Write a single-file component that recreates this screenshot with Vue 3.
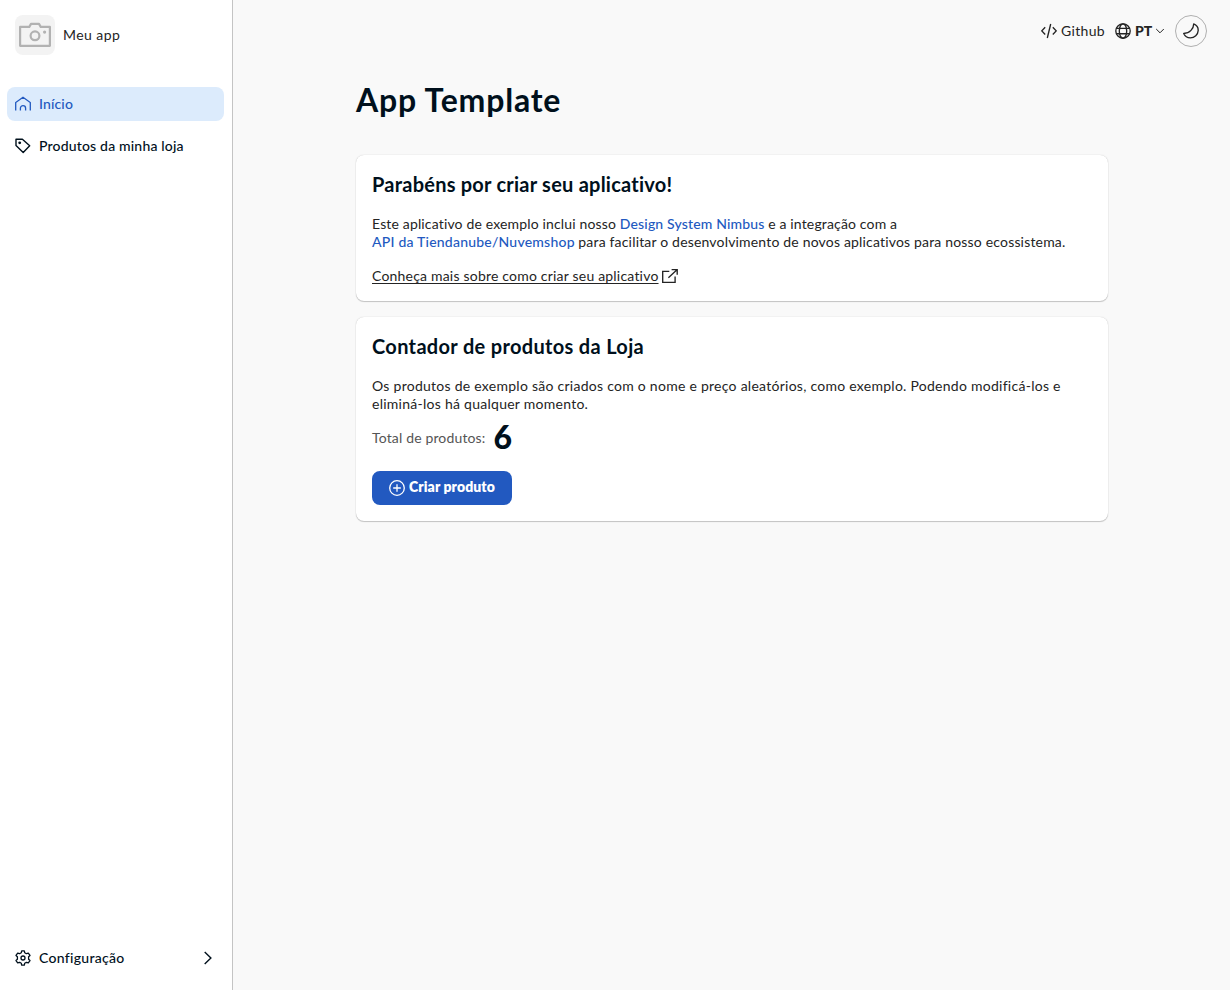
<script setup>
const productCount = 6
</script>

<template>
  <div class="page">
    <aside class="sidebar">
      <header class="brand">
        <span class="thumb">
          <svg width="32" height="32" viewBox="0 0 32 32" fill="none" stroke="#b2b2b2" stroke-width="2.2" stroke-linejoin="round">
            <path d="M1.1 7.9h9.2l1.7-3h8l1.7 3h9.2v18.9H1.1z" />
            <circle cx="16" cy="16.8" r="4.4" />
            <circle cx="25.6" cy="13.1" r="1.6" fill="#b2b2b2" stroke="none" />
          </svg>
        </span>
        <span class="brand-name">Meu app</span>
      </header>
      <nav class="menu">
        <a class="item active">
          <svg width="16" height="16" viewBox="0 0 16 16" fill="none" stroke="currentColor" stroke-width="1.3">
            <path d="M.7 14.5V6.6L8 1.2l7.3 5.4v7.9M5.4 14.5v-2.3a2.6 2.6 0 0 1 5.2 0v2.3" />
          </svg>
          <span class="t-inicio">Início</span>
        </a>
        <a class="item">
          <svg width="16" height="16" viewBox="0 0 16 16" fill="none" stroke="currentColor" stroke-width="1.4" stroke-linejoin="round">
            <path d="M1 1.3h6.4l7.3 6.4-6.500 6.700L1 7.400z" />
            <circle cx="4.7" cy="4.8" r="1.4" fill="currentColor" stroke="none" />
          </svg>
          <span class="t-produtos">Produtos da minha loja</span>
        </a>
      </nav>
      <a class="item config">
        <svg width="16" height="16" viewBox="0 0 16 16" fill="none" stroke="currentColor" stroke-width="1.3" stroke-linejoin="round">
          <path d="M6.3 2.7 6.7.8h2.6l.4 1.9 1.7 1 1.9-.6 1.7 2.300-1.400 1.300v2.600l1.400 1.300-1.700 2.300-1.900-.6-1.700 1-.4 1.900H6.700l-.4-1.900-1.700-1-1.900.6L1 10.600l1.400-1.300V6.700L1 5.400l1.700-2.300 1.900.6z" />
          <circle cx="8" cy="8" r="2" />
        </svg>
        <span class="t-config">Configuração</span>
        <svg class="chevron" width="16" height="16" viewBox="0 0 16 16" fill="none" stroke="currentColor" stroke-width="1.4">
          <path d="m4.7 1.9 6.2 6.1-6.2 6.1" />
        </svg>
      </a>
    </aside>

    <main class="main">
      <div class="topbar">
        <a class="top-link">
          <svg width="16" height="16" viewBox="0 0 16 16" fill="none" stroke="currentColor" stroke-width="1.35">
            <path d="M4.2 4.3.8 7.900l3.400 3.600M11.800 4.300l3.400 3.600-3.400 3.600M9.700 1 6.300 15" />
          </svg>
          <span class="t-github">Github</span>
        </a>
        <a class="top-link lang">
          <svg width="16" height="16" viewBox="0 0 16 16" fill="none" stroke="currentColor" stroke-width="1.35">
            <circle cx="8" cy="8" r="7.2" />
            <ellipse cx="8" cy="8" rx="3.7" ry="7.2" />
            <path d="M1.3 5.3h13.4M1.3 10.7h13.4" />
          </svg>
          <span class="t-lang">PT</span>
          <svg class="caret" width="10" height="10" viewBox="0 0 10 10" fill="none" stroke="currentColor">
            <path d="M1.2 3 5 6.8 8.8 3" />
          </svg>
        </a>
        <button class="theme" type="button" aria-label="Tema">
          <svg width="16" height="16" viewBox="0 0 16 16" fill="none" stroke="currentColor" stroke-width="1.35" stroke-linejoin="round">
            <path d="M10.7.9c-.1 4.700-3.800 9.400-10 9.600 1.200 2.600 3.700 4.300 6.600 4.300 4.200 0 7.700-3.200 7.900-7.300.1-2.800-1.700-5.500-4.500-6.600z" />
          </svg>
        </button>
      </div>

      <div class="content">
        <h1 class="title">App Template</h1>

        <section class="card">
          <h2 class="t-congrats">Parabéns por criar seu aplicativo!</h2>
          <p class="text">
            <span class="t-intro">Este aplicativo de exemplo inclui nosso <a class="link">Design System Nimbus</a> e a integração com a</span><br>
            <a class="link t-api">API da Tiendanube/Nuvemshop</a> <span class="t-rest">para facilitar o desenvolvimento de novos aplicativos para nosso ecossistema.</span>
          </p>
          <a class="learn">
            <span class="t-learn">Conheça mais sobre como criar seu aplicativo</span>
            <svg width="16" height="16" viewBox="0 0 16 16" fill="none" stroke="currentColor" stroke-width="1.35">
              <path d="M7.3 3.4H.7v11h12.4V8.600M9.600 1.600h5.600v5.200M15 1.800 6.400 9.700" />
            </svg>
          </a>
        </section>

        <section class="card counter">
          <h2 class="t-counter">Contador de produtos da Loja</h2>
          <p class="text t-desc">Os produtos de exemplo são criados com o nome e preço aleatórios, como exemplo. Podendo modificá-los e<br>eliminá-los há qualquer momento.</p>
          <div class="total">
            <span class="total-label">Total de produtos:</span>
            <strong class="total-value">{{ productCount }}</strong>
          </div>
          <button class="create" type="button">
            <svg width="16" height="16" viewBox="0 0 16 16" fill="none" stroke="currentColor" stroke-width="1.3">
              <circle cx="8" cy="8" r="7.3" />
              <path d="M8 4.2v7.6M4.2 8h7.6" />
            </svg>
            <span>Criar produto</span>
          </button>
        </section>
      </div>
    </main>
  </div>
</template>

<style>
body { background: #f9f9f9; }
</style>

<style scoped>
.page {
  display: flex;
  height: 990px;
  overflow: hidden;
  font-family: Lato, "Open Sans", sans-serif;
  font-size: 14px;
  line-height: 18px;
  color: #242424;
  background: #f9f9f9;
}
.page * { box-sizing: border-box; }
svg { display: block; flex: none; }
.sidebar {
  display: flex;
  flex-direction: column;
  flex: none;
  width: 233px;
  padding: 15px 8px 15px 7px;
  background: #fff;
  border-right: 1px solid #c4c4c4;
}
.brand { display: flex; align-items: center; gap: 8px; height: 40px; padding-left: 8px; margin-bottom: 32px; }
.thumb { display: grid; place-items: center; width: 40px; height: 40px; border-radius: 8px; background: #f3f3f3; }
.brand-name { letter-spacing: .43px; }
.menu { display: flex; flex-direction: column; gap: 8px; flex: 1; }
.item { display: flex; align-items: center; gap: 8px; height: 34px; padding: 0 8px; border-radius: 8px; font-weight: 500; color: #00101c; }
.item.active { background: #dcebfc; color: #2259c0; }
.chevron { margin-left: auto; }
.t-inicio { letter-spacing: .14px; }
.t-produtos { letter-spacing: .18px; }
.t-config { letter-spacing: .3px; }
.main { flex: 1; min-width: 0; }
.topbar { display: flex; justify-content: flex-end; align-items: center; height: 62px; padding-right: 23px; }
.top-link { display: flex; align-items: center; gap: 4px; }
.t-github { letter-spacing: .33px; }
.lang { margin-left: 10px; }
.t-lang { font-weight: 900; letter-spacing: -.1px; }
.caret { margin-left: -1px; }
.theme { display: grid; place-items: center; width: 32px; height: 32px; margin-left: 10px; padding: 0; border: 1px solid #b0b0b0; border-radius: 50%; background: transparent; color: #242424; }
.content { width: 752px; margin: 0 auto; padding-left: 1px; box-sizing: content-box; }
.title { margin: 17px 0 35px; font-size: 32px; line-height: 41px; font-weight: 700; letter-spacing: .8px; color: #00101c; }
.card { display: flex; flex-direction: column; align-items: flex-start; height: 146px; padding: 16px; margin-bottom: 16px; border-radius: 8px; background: #fff; box-shadow: 0 0 1px rgba(136, 136, 136, .5), 0 1px 1px rgba(0, 0, 0, .2); }
h2 { margin: 0; font-size: 20px; line-height: 27px; font-weight: 700; color: #00101c; }
.t-congrats { letter-spacing: .235px; }
.t-counter { letter-spacing: .325px; }
.text { margin: 17px 0 16px; white-space: nowrap; }
.t-intro { letter-spacing: .155px; }
.link { color: #2259c0; font-weight: 500; }
.t-api { letter-spacing: .22px; }
.t-rest { letter-spacing: .178px; }
.learn { display: flex; align-items: center; gap: 3px; }
.t-learn { letter-spacing: .2px; text-decoration: underline; text-underline-offset: 2px; text-decoration-thickness: 1px; }
.counter { height: 204px; }
.t-desc { letter-spacing: .263px; margin-bottom: 4px; }
.total { display: flex; align-items: center; gap: 8px; height: 41px; }
.total-label { letter-spacing: .15px; color: #555; }
.total-value { font-size: 32px; line-height: 39px; height: 41px; font-weight: 900; color: #00101c; }
.create { display: flex; align-items: center; justify-content: center; gap: 4px; width: 140px; height: 34px; margin-top: 13px; padding: 0; border: 0; border-radius: 8px; background: #2259c0; color: #fff; font: 800 14px/18px Lato, sans-serif; letter-spacing: .11px; }
.create span { margin-top: -2px; }
</style>
